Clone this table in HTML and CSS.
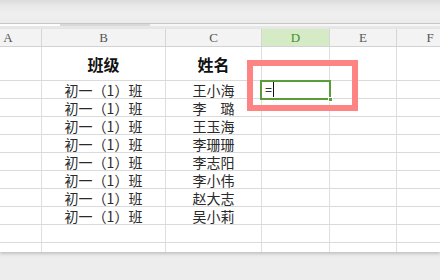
FILE: index.html
```html
<!DOCTYPE html>
<html lang="zh-CN">
<head>
<meta charset="utf-8">
<title>班级名单</title>
<link rel="stylesheet" href="styles.css">
</head>
<body>
<div class="app">
  <div class="toolbar"></div>
  <div class="tabstrip"><span class="seg seg-left"></span><span class="seg seg-gap"></span><span class="seg seg-right"></span></div>
  <div class="viewport">
    <div class="sheet">
      <div class="col-head">A</div>
      <div class="col-head">B</div>
      <div class="col-head">C</div>
      <div class="col-head active">D</div>
      <div class="col-head">E</div>
      <div class="col-head">F</div>

      <div class="cell tall"></div>
      <div class="cell tall title">班级</div>
      <div class="cell tall title">姓名</div>
      <div class="cell tall"></div>
      <div class="cell tall"></div>
      <div class="cell tall"></div>

      <div class="cell"></div>
      <div class="cell text">初一（1）班</div>
      <div class="cell text">王小海</div>
      <div class="cell selected"><span class="formula">=</span><span class="caret"></span><span class="handle"></span></div>
      <div class="cell"></div>
      <div class="cell"></div>

      <div class="cell"></div>
      <div class="cell text">初一（1）班</div>
      <div class="cell text">李　璐</div>
      <div class="cell"></div>
      <div class="cell"></div>
      <div class="cell"></div>

      <div class="cell"></div>
      <div class="cell text">初一（1）班</div>
      <div class="cell text">王玉海</div>
      <div class="cell"></div>
      <div class="cell"></div>
      <div class="cell"></div>

      <div class="cell"></div>
      <div class="cell text">初一（1）班</div>
      <div class="cell text">李珊珊</div>
      <div class="cell"></div>
      <div class="cell"></div>
      <div class="cell"></div>

      <div class="cell"></div>
      <div class="cell text">初一（1）班</div>
      <div class="cell text">李志阳</div>
      <div class="cell"></div>
      <div class="cell"></div>
      <div class="cell"></div>

      <div class="cell"></div>
      <div class="cell text">初一（1）班</div>
      <div class="cell text">李小伟</div>
      <div class="cell"></div>
      <div class="cell"></div>
      <div class="cell"></div>

      <div class="cell"></div>
      <div class="cell text">初一（1）班</div>
      <div class="cell text">赵大志</div>
      <div class="cell"></div>
      <div class="cell"></div>
      <div class="cell"></div>

      <div class="cell"></div>
      <div class="cell text">初一（1）班</div>
      <div class="cell text">吴小莉</div>
      <div class="cell"></div>
      <div class="cell"></div>
      <div class="cell"></div>

      <div class="cell"></div>
      <div class="cell"></div>
      <div class="cell"></div>
      <div class="cell"></div>
      <div class="cell"></div>
      <div class="cell"></div>

      <div class="cell stub"></div>
      <div class="cell stub"></div>
      <div class="cell stub"></div>
      <div class="cell stub"></div>
      <div class="cell stub"></div>
      <div class="cell stub"></div>
    </div>
  </div>
  <div class="mark"></div>
</div>
</body>
</html>
```

FILE: styles.css
```css
* {
  box-sizing: border-box;
}

html,
body {
  margin: 0;
  padding: 0;
}

body {
  width: 440px;
  height: 280px;
  overflow: hidden;
  background: #ededed;
  font-family: "Noto Sans CJK SC", sans-serif;
}

.app {
  position: relative;
  width: 440px;
  height: 280px;
  overflow: hidden;
  background: #ededed;
}

/* window chrome above the grid */
.toolbar {
  height: 24px;
  background: linear-gradient(#dcdcdc 0, #e9e9e9 6px, #efefef 14px, #ececec 100%);
  border-bottom: 1px solid #c6c6c6;
}

.tabstrip {
  display: flex;
  height: 5px;
  background: #e7e7e7;
}

.seg {
  height: 2px;
}

.seg-left {
  width: 60px;
  background: #fdfdfd;
}

.seg-gap {
  width: 90px;
  background: #d9d9d9;
}

.seg-right {
  flex: 1;
  background: #f6f6f6;
}

/* worksheet */
.viewport {
  height: 223px;
  overflow: hidden;
  background: #fff;
  box-shadow: 0 2px 3px rgba(0, 0, 0, 0.18);
  position: relative;
}

.sheet {
  display: grid;
  grid-template-columns: 67px 124px 96px 68px 67px 67px;
  grid-template-rows: 18px 34px repeat(9, 18px) 9px;
  width: 489px;
  margin-left: -25px;
}

.col-head {
  display: flex;
  align-items: center;
  justify-content: center;
  background: #f3f3f3;
  border-right: 1px solid #d6d6d6;
  border-bottom: 1px solid #d2d2d2;
  font-family: "Liberation Serif", "DejaVu Serif", serif;
  font-size: 13px;
  line-height: 1;
  color: #555;
}

.col-head.active {
  background: #d5ebc5;
  color: #3e8f2a;
}

.cell {
  display: flex;
  align-items: center;
  justify-content: center;
  border-right: 1px solid #dedede;
  border-bottom: 1px solid #dadada;
  background: #fff;
  line-height: 1;
}

.stub {
  border-bottom: none;
}

.title {
  font-size: 16px;
  font-weight: 700;
  color: #111;
}

.text {
  font-size: 14px;
  color: #2a2a2a;
}

/* active cell being edited */
.selected {
  position: relative;
  justify-content: flex-start;
  padding-left: 3px;
}

.selected::after {
  content: "";
  position: absolute;
  left: -2px;
  top: -1px;
  right: -2px;
  bottom: -2px;
  border: 2px solid #5a9b3a;
}

.formula {
  font-family: "Liberation Sans", sans-serif;
  font-size: 12px;
  color: #333;
  line-height: 1;
}

.caret {
  width: 1px;
  height: 15px;
  margin-left: 1px;
  background: #111;
}

.handle {
  position: absolute;
  right: -4px;
  bottom: -4px;
  width: 5px;
  height: 5px;
  background: #5a9b3a;
  border: 1px solid #fff;
  z-index: 1;
}

/* highlight frame drawn over the grid */
.mark {
  position: absolute;
  left: 247px;
  top: 60px;
  width: 111px;
  height: 51px;
  border: 6px solid #fe8383;
}
```
